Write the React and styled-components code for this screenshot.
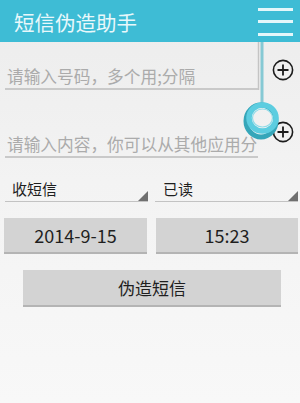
import React from 'react';
import styled, { createGlobalStyle } from 'styled-components';

const GlobalStyle = createGlobalStyle`
  html, body {
    margin: 0;
    padding: 0;
    background: #f1f1f1;
  }
`;

const FONT = '"Noto Sans CJK SC", "Noto Sans", Roboto, sans-serif';

const Page = styled.div`
  position: relative;
  width: 300px;
  height: 403px;
  overflow: hidden;
  font-family: ${FONT};
  background: linear-gradient(#ececec, #f3f3f3 45%, #f8f8f8);
`;

const Header = styled.div`
  display: flex;
  align-items: center;
  justify-content: space-between;
  height: 42px;
  padding: 0 7px 0 14px;
  background: #3ebcd5;
`;

const Title = styled.div`
  color: #e9f8fb;
  font-size: 20.5px;
  line-height: 24px;
  margin-top: 1px;
`;

const Menu = styled.div`
  display: flex;
  flex-direction: column;
  gap: 9.5px;
  margin-top: 1px;
`;

const MenuBar = styled.div`
  width: 35px;
  height: 3px;
  background: #e4f7fa;
`;

const Form = styled.div`
  display: flex;
  flex-direction: column;
`;

const FieldRow = styled.div`
  display: flex;
  padding-left: 5px;
  gap: 14px;
`;

const InputBox = styled.div`
  width: 253px;
  height: ${p => p.$height}px;
  box-sizing: border-box;
  display: flex;
  align-items: flex-end;
  padding: 0 0 1px 2px;
  border-bottom: 2px solid #c9c9c9;
`;

const Placeholder = styled.span`
  color: #ababab;
  font-size: 16.7px;
  line-height: 22px;
  white-space: nowrap;
`;

const PlusWrap = styled.div`
  margin-top: ${p => p.$top}px;
  width: 22px;
  height: 22px;
`;

const Pair = styled.div`
  display: grid;
  grid-template-columns: ${p => p.$cols};
  column-gap: ${p => p.$gap}px;
  padding: 0 2px 0 ${p => p.$left}px;
  margin-top: ${p => p.$top}px;
`;

const Spinner = styled.div`
  position: relative;
  height: 44px;
  box-sizing: border-box;
  display: flex;
  align-items: flex-end;
  padding: 0 0 2px ${p => p.$pad}px;
  border-bottom: 1.5px solid #c3c3c3;
  color: #1e1e1e;
  font-size: 15px;
  line-height: 20px;
`;

const Corner = styled.div`
  position: absolute;
  right: 0;
  bottom: 0;
  width: 0;
  height: 0;
  border-left: 10px solid transparent;
  border-bottom: 10px solid #6f6f6f;
`;

const GrayButton = styled.div`
  height: ${p => p.$height}px;
  box-sizing: border-box;
  display: flex;
  align-items: center;
  justify-content: center;
  background: #d3d3d3;
  border-bottom: 2px solid #b4b4b4;
  color: #1f1f1f;
  font-size: ${p => p.$size}px;
`;

const SubmitWrap = styled.div`
  padding: 0 19px 0 23px;
  margin-top: 16px;
`;

const Cord = styled.svg`
  position: absolute;
  left: 240px;
  top: 42px;
`;

const Plus = () => (
  <svg width="22" height="22" viewBox="0 0 22 22">
    <circle cx="11" cy="11" r="9.6" fill="none" stroke="#1b1b1b" strokeWidth="1.6" />
    <path d="M11 5.5v11M5.5 11h11" stroke="#1b1b1b" strokeWidth="1.8" />
  </svg>
);

export default function App() {
  return (
    <Page>
      <GlobalStyle />
      <Header>
        <Title>短信伪造助手</Title>
        <Menu>
          <MenuBar />
          <MenuBar />
          <MenuBar />
        </Menu>
      </Header>
      <Form>
        <FieldRow>
          <InputBox $height={48}>
            <Placeholder>请输入号码，多个用;分隔</Placeholder>
          </InputBox>
          <PlusWrap $top={17}>
            <Plus />
          </PlusWrap>
        </FieldRow>
        <FieldRow>
          <InputBox $height={68}>
            <Placeholder>请输入内容，你可以从其他应用分</Placeholder>
          </InputBox>
          <PlusWrap $top={31}>
            <Plus />
          </PlusWrap>
        </FieldRow>
        <Pair $cols="143px 143px" $gap={7} $left={5} $top={0}>
          <Spinner $pad={7}>
            收短信
            <Corner />
          </Spinner>
          <Spinner $pad={8}>
            已读
            <Corner />
          </Spinner>
        </Pair>
        <Pair $cols="143px 142px" $gap={9} $left={4} $top={16}>
          <GrayButton $height={36} $size={18}>2014-9-15</GrayButton>
          <GrayButton $height={36} $size={18}>15:23</GrayButton>
        </Pair>
        <SubmitWrap>
          <GrayButton $height={37} $size={17}>伪造短信</GrayButton>
        </SubmitWrap>
      </Form>
      <Cord width="50" height="100" viewBox="0 0 50 100">
        <line x1="18.5" y1="0" x2="18.5" y2="48" stroke="#c4c4c4" strokeWidth="1.5" />
        <line x1="22" y1="0" x2="22" y2="62" stroke="#86c9d4" strokeWidth="3" />
        <ellipse cx="21" cy="79" rx="15" ry="16" fill="none" stroke="#35a6b9" strokeWidth="5" />
        <ellipse cx="22.5" cy="76" rx="13.5" ry="13" fill="none" stroke="#5ccde0" strokeWidth="5.5" />
        <ellipse cx="22.5" cy="76" rx="10" ry="9" fill="none" stroke="#8ddbe8" strokeWidth="1.2" />
      </Cord>
    </Page>
  );
}
